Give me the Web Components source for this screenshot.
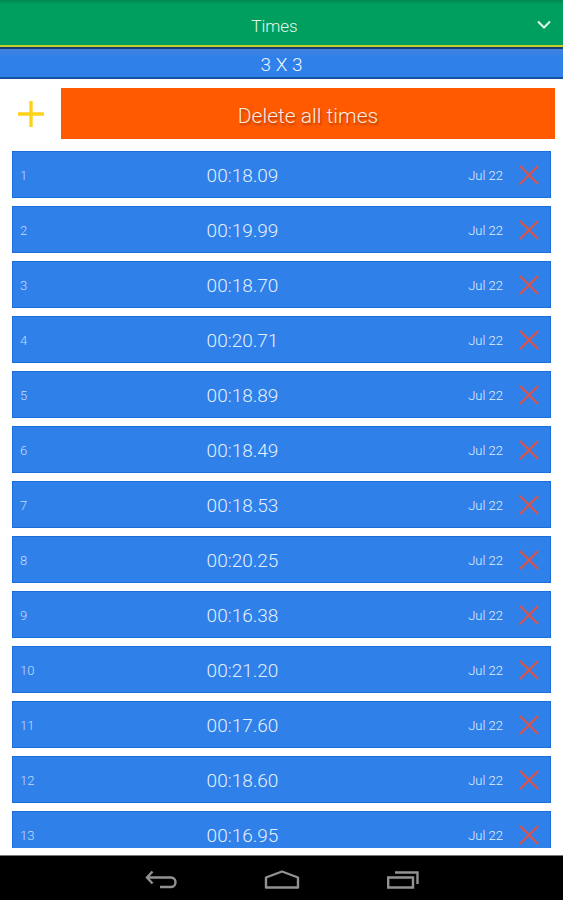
<!DOCTYPE html>
<html lang="en">
<head>
<meta charset="utf-8">
<meta name="viewport" content="width=device-width, initial-scale=1">
<title>Times</title>
<style>
    body {
        margin: 0;
        background: #fff;
        color: #fff;
        font-family: Roboto, "Liberation Sans", sans-serif;
        font-weight: 300;
    }
</style>
</head>
<body>
<times-app></times-app>

<script>
class TitleBar extends HTMLElement {
    constructor() {
        super();
        this.attachShadow({ mode: 'open' });
        this.render();
    }

    render() {
        this.shadowRoot.innerHTML = `
            <style>
                :host {
                    display: grid;
                    grid-template-columns: 38px 1fr 38px;
                    align-items: center;
                    height: 45px;
                    background: linear-gradient(#00864f, #009e5f 4px);
                    border-bottom: 2px solid #c3cf28;
                    color: #e4f8ee;
                }
                h1 {
                    grid-column: 2;
                    margin: 0;
                    padding-top: 6px;
                    padding-right: 14px;
                    text-align: center;
                    font-size: 17px;
                    line-height: 24px;
                    font-weight: 300;
                }
                button {
                    display: flex;
                    justify-content: center;
                    padding: 4px 0 0;
                    border: 0;
                    background: none;
                    color: inherit;
                }
            </style>
            <h1><slot></slot></h1>
            <button type="button" aria-label="Choose page">
                <svg width="14" height="10" viewBox="0 0 14 10" fill="none" stroke="currentColor" stroke-width="2"><path d="M1 1.5L7 7.5L13 1.5"/></svg>
            </button>
        `;
    }
}

class PuzzleBar extends HTMLElement {
    constructor() {
        super();
        this.attachShadow({ mode: 'open' });
        this.shadowRoot.innerHTML = `
            <style>
                :host {
                    display: block;
                    padding-top: 4px;
                    border-top: 2px solid #143c70;
                    border-bottom: 2px solid #14539f;
                    background: linear-gradient(#4083dc, #2f80e9 8px);
                    color: #f0f6fe;
                    text-align: center;
                    font-size: 19px;
                    line-height: 24px;
                }
            </style>
            <slot></slot>
        `;
    }
}

class TimesToolbar extends HTMLElement {
    constructor() {
        super();
        this.attachShadow({ mode: 'open' });
        this.render();
    }

    render() {
        this.shadowRoot.innerHTML = `
            <style>
                :host {
                    display: flex;
                    padding: 9px 8px 12px 0;
                }
                button {
                    border: 0;
                    margin: 0;
                    padding: 0;
                    font: inherit;
                    color: inherit;
                }
                .add {
                    flex: 0 0 61px;
                    display: flex;
                    align-items: center;
                    justify-content: center;
                    background: none;
                    color: #ffd21a;
                }
                .clear {
                    flex: 1;
                    height: 51px;
                    padding-top: 4px;
                    background: #ff5a00;
                    color: #ffece2;
                    font-size: 21px;
                    line-height: 28px;
                    text-shadow: 1px 2px 2px rgba(90, 30, 0, .5);
                }
            </style>
            <button class="add" type="button" aria-label="Add time">
                <svg width="26" height="26" viewBox="0 0 26 26" fill="none" stroke="currentColor" stroke-width="3.4"><path d="M13 0V26M0 13H26"/></svg>
            </button>
            <button class="clear" type="button">Delete all times</button>
        `;
    }
}

class TimeRow extends HTMLElement {
    constructor() {
        super();
        this.attachShadow({ mode: 'open' });
    }

    connectedCallback() {
        this.render();
        this.shadowRoot.querySelector('button').addEventListener('click', () => this.remove());
    }

    render() {
        this.shadowRoot.innerHTML = `
            <style>
                :host {
                    display: grid;
                    grid-template-columns: 34px 1fr 72px 48px;
                    align-items: center;
                    flex: none;
                    height: 47px;
                    padding-left: 8px;
                    background: #2f80e9;
                    box-shadow: inset 0 0 0 1px #1a6fdc;
                    color: #e4effd;
                    font-size: 13px;
                    line-height: 24px;
                }
                .number {
                    color: #c6dcfa;
                }
                .time {
                    text-align: center;
                    font-size: 19px;
                }
                .date {
                    text-align: right;
                }
                span {
                    padding-top: 2px;
                }
                button {
                    display: flex;
                    justify-content: center;
                    padding: 0 0 0 4px;
                    border: 0;
                    background: none;
                    color: #d9544a;
                }
            </style>
            <span class="number">${this.getAttribute('number')}</span>
            <span class="time">${this.getAttribute('time')}</span>
            <span class="date">${this.getAttribute('date')}</span>
            <button type="button" aria-label="Delete time ${this.getAttribute('number')}">
                <svg width="20" height="20" viewBox="0 0 20 20" fill="none" stroke="currentColor" stroke-width="2.2"><path d="M1 1L19 19M19 1L1 19"/></svg>
            </button>
        `;
    }
}

class SystemBar extends HTMLElement {
    constructor() {
        super();
        this.attachShadow({ mode: 'open' });
        this.render();
    }

    render() {
        this.shadowRoot.innerHTML = `
            <style>
                :host {
                    display: block;
                }
                nav {
                    display: flex;
                    justify-content: center;
                    height: 44px;
                    background: #000;
                    border-top: 1px solid #777;
                }
                button {
                    width: 121px;
                    display: flex;
                    justify-content: center;
                    align-items: center;
                    padding: 4px 0 0;
                    border: 0;
                    background: none;
                    color: #929292;
                }
            </style>
            <nav aria-label="System">
                <button type="button" aria-label="Back">
                    <svg width="32" height="20" viewBox="0 0 32 20" fill="none" stroke="currentColor" stroke-width="2.4"><path d="M7.500 1.500L2 7.500L7.500 13.500M2.500 7.500H26C32 7.500 32 17 26 17H15"/></svg>
                </button>
                <button type="button" aria-label="Home">
                    <svg width="36" height="20" viewBox="0 0 36 20" fill="none" stroke="currentColor" stroke-width="2.4" stroke-linejoin="round"><path d="M2 17.500V7.500L18 1.500L34 7.500V17.500Z"/></svg>
                </button>
                <button type="button" aria-label="Recent apps">
                    <svg width="32" height="20" viewBox="0 0 32 20" fill="none" stroke="currentColor" stroke-width="2.4"><path d="M1.200 7.500H26V17.500H1.200Z"/><path d="M8 2.500H30.500V14"/></svg>
                </button>
            </nav>
        `;
    }
}

class TimesApp extends HTMLElement {
    constructor() {
        super();
        this.attachShadow({ mode: 'open' });
        this.times = [
            '00:18.09', '00:19.99', '00:18.70', '00:20.71', '00:18.89',
            '00:18.49', '00:18.53', '00:20.25', '00:16.38', '00:21.20',
            '00:17.60', '00:18.60', '00:16.95'
        ];
        this.render();
    }

    connectedCallback() {
        const toolbar = this.shadowRoot.querySelector('times-toolbar');
        toolbar.shadowRoot.querySelector('.clear').addEventListener('click', () => {
            this.shadowRoot.querySelector('main').replaceChildren();
        });
    }

    render() {
        const rows = this.times.map((time, index) =>
            `<time-row number="${index + 1}" time="${time}" date="Jul 22"></time-row>`
        ).join('');

        this.shadowRoot.innerHTML = `
            <style>
                :host {
                    display: flex;
                    flex-direction: column;
                    height: 100vh;
                }
                title-bar, puzzle-bar, times-toolbar, system-bar {
                    flex: none;
                }
                main {
                    flex: 1;
                    min-height: 0;
                    display: flex;
                    flex-direction: column;
                    gap: 8px;
                    margin: 0 12px 7px;
                    overflow: hidden;
                }
            </style>
            <title-bar>Times</title-bar>
            <puzzle-bar>3 X 3</puzzle-bar>
            <times-toolbar></times-toolbar>
            <main>${rows}</main>
            <system-bar></system-bar>
        `;
    }
}

customElements.define('title-bar', TitleBar);
customElements.define('puzzle-bar', PuzzleBar);
customElements.define('times-toolbar', TimesToolbar);
customElements.define('time-row', TimeRow);
customElements.define('system-bar', SystemBar);
customElements.define('times-app', TimesApp);
</script>
</body>
</html>
